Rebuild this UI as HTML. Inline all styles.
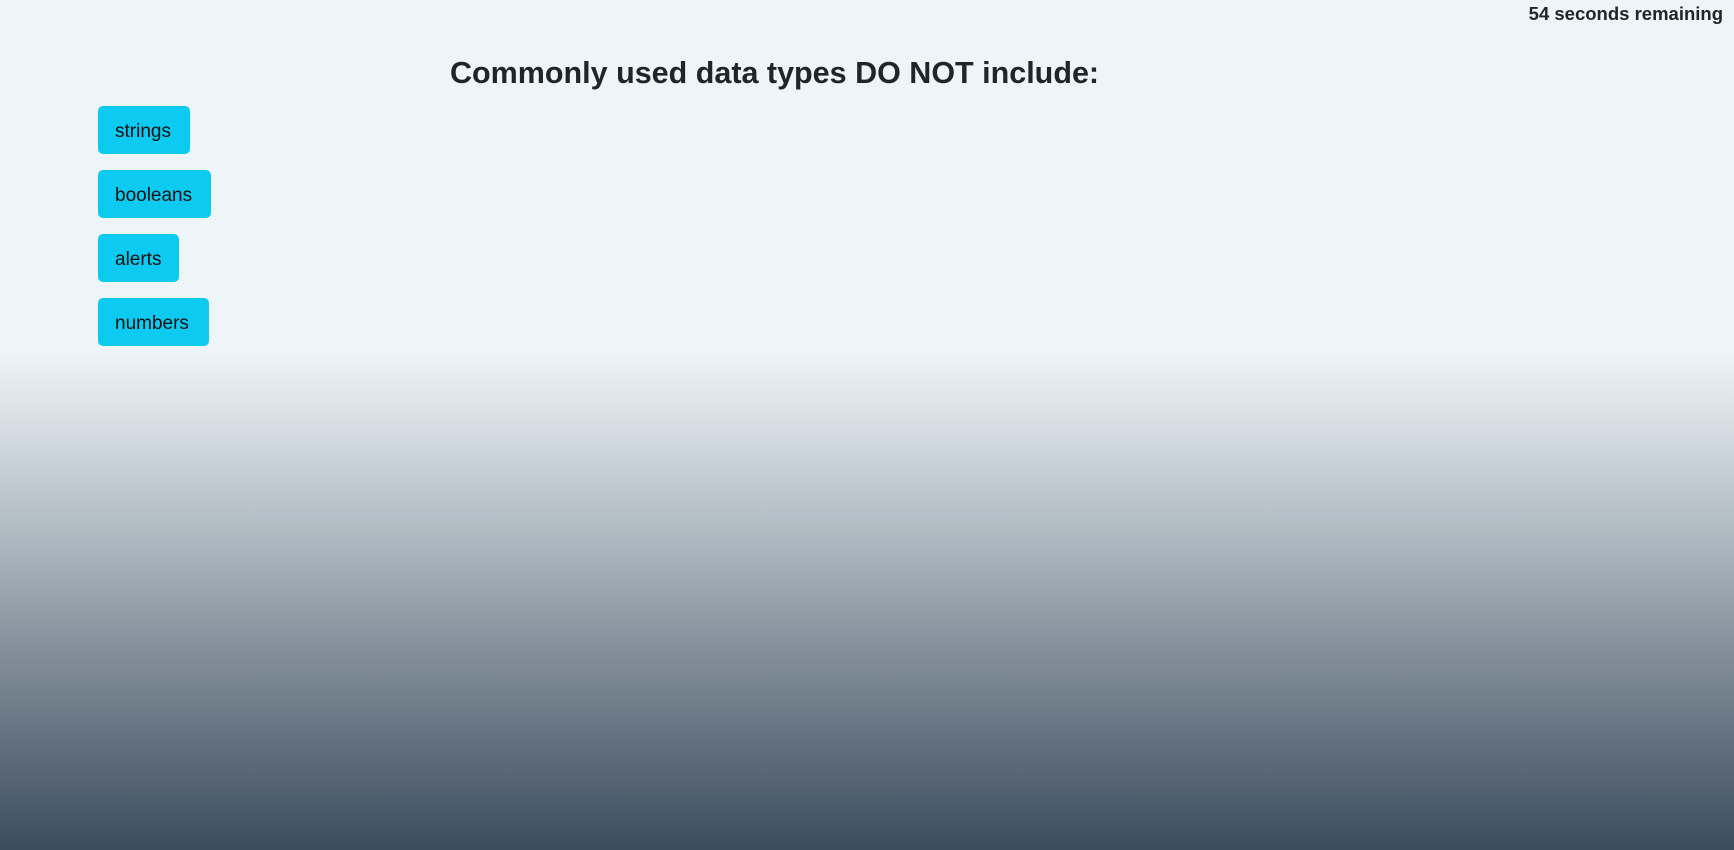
<!DOCTYPE html>
<html><head><style>
html,body{margin:0;padding:0;}
body{width:1734px;height:850px;overflow:hidden;position:relative;font-family:"Liberation Sans",sans-serif;color:#212529;
background:linear-gradient(to bottom,#edf5f9 0px,#edf5f9 350px,#d8dfe5 420px,#a9b4bc 550px,#7c8995 670px,#3d4d5e 850px);}
.timer{position:absolute;right:11px;top:3px;font-weight:bold;font-size:18.5px;}
h1{position:absolute;left:450px;top:56px;margin:0;font-size:30.5px;font-weight:bold;white-space:nowrap;}
.btn{position:absolute;left:98px;height:48px;line-height:51px;background:#0dcaf0;border-radius:5px;font-size:19px;color:#111;padding:0 17px;box-sizing:border-box;}
</style></head><body>
<div class="timer">54 seconds remaining</div>
<h1>Commonly used data types DO NOT include:</h1>
<div class="btn" style="top:106px;width:92px">strings</div>
<div class="btn" style="top:170px;width:113px">booleans</div>
<div class="btn" style="top:234px;width:81px">alerts</div>
<div class="btn" style="top:298px;width:111px">numbers</div>
</body></html>
